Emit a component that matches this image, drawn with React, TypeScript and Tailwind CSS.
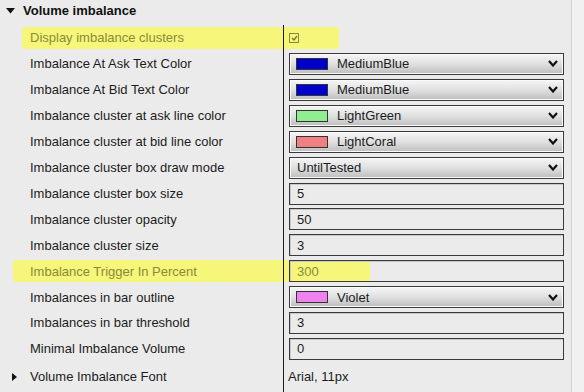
import { ReactNode } from "react";

type Value =
  | { kind: "check" }
  | { kind: "color"; swatch: string; label: string }
  | { kind: "select"; label: string }
  | { kind: "text"; label: string }
  | { kind: "plain"; label: string };

interface Row {
  label: string;
  value: Value;
  expandable?: boolean;
  marked?: boolean;
}

const rows: Row[] = [
  { label: "Display imbalance clusters", value: { kind: "check" }, marked: true },
  { label: "Imbalance At Ask Text Color", value: { kind: "color", swatch: "#0000cd", label: "MediumBlue" } },
  { label: "Imbalance At Bid Text Color", value: { kind: "color", swatch: "#0000cd", label: "MediumBlue" } },
  { label: "Imbalance cluster at ask line color", value: { kind: "color", swatch: "#90ee90", label: "LightGreen" } },
  { label: "Imbalance cluster at bid line color", value: { kind: "color", swatch: "#f08080", label: "LightCoral" } },
  { label: "Imbalance cluster box draw mode", value: { kind: "select", label: "UntilTested" } },
  { label: "Imbalance cluster box size", value: { kind: "text", label: "5" } },
  { label: "Imbalance cluster opacity", value: { kind: "text", label: "50" } },
  { label: "Imbalance cluster size", value: { kind: "text", label: "3" } },
  { label: "Imbalance Trigger In Percent", value: { kind: "text", label: "300" }, marked: true },
  { label: "Imbalances in bar outline", value: { kind: "color", swatch: "#ee82ee", label: "Violet" } },
  { label: "Imbalances in bar threshold", value: { kind: "text", label: "3" } },
  { label: "Minimal Imbalance Volume", value: { kind: "text", label: "0" } },
  { label: "Volume Imbalance Font", value: { kind: "plain", label: "Arial, 11px" }, expandable: true },
];

function Chevron() {
  return (
    <svg width="10" height="7" viewBox="0 0 10 7" className="ml-auto mr-[5px]">
      <polyline points="1,1 5,5.5 9,1" fill="none" stroke="#111" strokeWidth="2.2" />
    </svg>
  );
}

function Dropdown({ children }: { children: ReactNode }) {
  return (
    <div className="flex h-[22px] w-[275px] items-center border border-[#3a3a3a] bg-gradient-to-b from-[#f6f6f6] via-[#e0e0e0] to-[#bdbdbd] shadow-[inset_0_0_0_1px_#fafafa]">
      {children}
      <Chevron />
    </div>
  );
}

function ValueCell({ value, marked }: { value: Value; marked?: boolean }) {
  switch (value.kind) {
    case "check":
      return (
        <div className="flex h-[10px] w-[10px] items-center justify-center border border-[#8a8a3c]">
          <svg width="7" height="6" viewBox="0 0 7 6">
            <polyline points="1,3 3,5 6,1" fill="none" stroke="#7a7a2c" strokeWidth="1.4" />
          </svg>
        </div>
      );
    case "color":
      return (
        <Dropdown>
          <span className="ml-[6px] h-[12px] w-[32px] border border-[#333]" style={{ backgroundColor: value.swatch }} />
          <span className="ml-[9px]">{value.label}</span>
        </Dropdown>
      );
    case "select":
      return (
        <Dropdown>
          <span className="ml-[7px]">{value.label}</span>
        </Dropdown>
      );
    case "text":
      return (
        <div
          className={`flex h-[22px] w-[275px] items-center border border-[#3a3a3a] pl-[7px] shadow-[inset_1px_1px_0_#c8c8c8] ${
            marked ? "text-[#8a8a3a]" : ""
          }`}
        >
          {value.label}
        </div>
      );
    case "plain":
      return <span className="-ml-[1px]">{value.label}</span>;
  }
}

export default function App() {
  return (
    <div className="relative flex h-[392px] w-[584px] overflow-hidden bg-[#ebebeb] font-['Liberation_Sans',Arial,sans-serif] text-[13px] text-[#1c1c1c]">
      {/* highlighter marks, drawn under the text */}
      <div className="absolute left-[22px] top-[27px] h-[22px] w-[317px] rounded-[3px] bg-[#f6f67a]" />
      <div className="absolute left-[13px] top-[260px] h-[22px] w-[357px] rounded-[3px] bg-[#f6f67a]" />

      <div className="relative flex w-[571px] flex-col">
        <div className="flex h-[25px] items-center pb-[3px]">
          <svg width="9" height="6" viewBox="0 0 9 6" className="ml-[6px]">
            <polygon points="0,0 9,0 4.5,5.5" fill="#111" />
          </svg>
          <span className="ml-[8px] text-[13px] font-bold text-[#111]">Volume imbalance</span>
        </div>
        {rows.map((row, i) => (
          <div key={row.label} className={`flex ${i === rows.length - 1 ? "h-[30px]" : "h-[26px]"}`}>
            <div className="flex w-[283px] items-center">
              {row.expandable ? (
                <svg width="5" height="8" viewBox="0 0 5 8" className="ml-[12px] mr-[13px]">
                  <polygon points="0,0 5,4 0,8" fill="#111" />
                </svg>
              ) : (
                <span className="w-[30px]" />
              )}
              <span className={row.marked ? "text-[#8a8a3a]" : ""}>{row.label}</span>
            </div>
            <div className="flex flex-1 items-center border-l border-[#1a1a1a] pl-[5px]">
              <ValueCell value={row.value} marked={row.marked} />
            </div>
          </div>
        ))}
      </div>
      <div className="w-px bg-[#d2d2d2]" />
      <div className="flex-1 bg-[#f1f1f1]" />
    </div>
  );
}
